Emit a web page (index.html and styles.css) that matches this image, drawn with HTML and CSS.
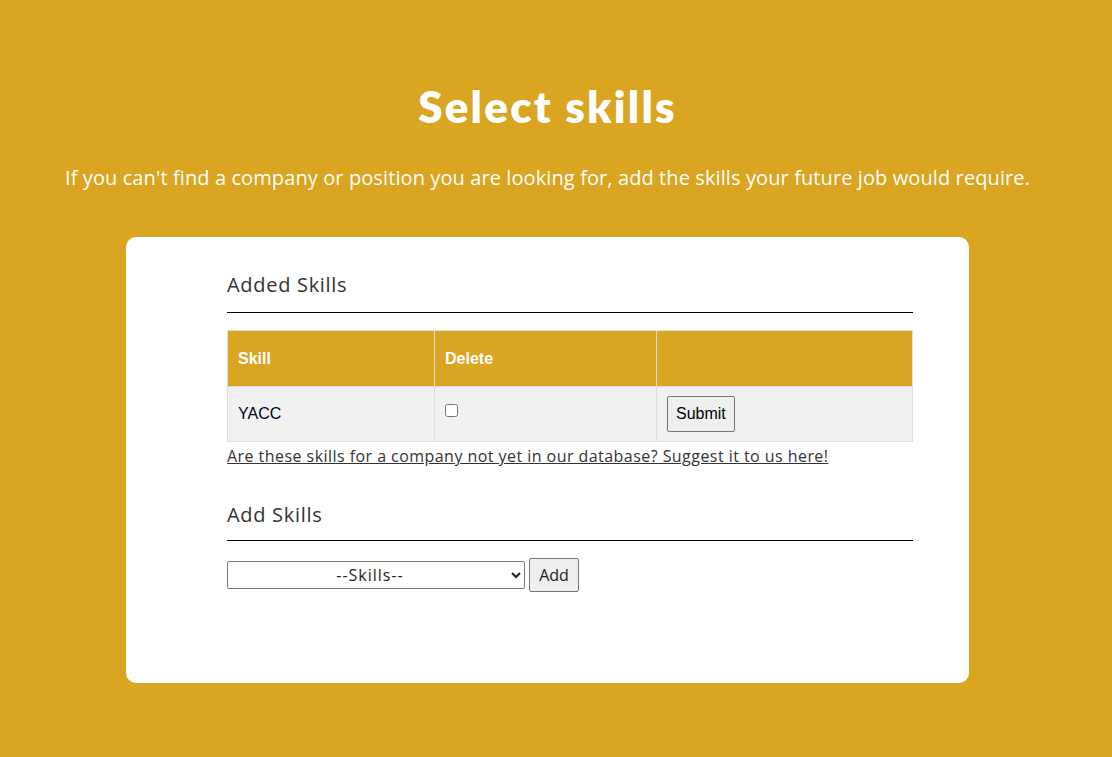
FILE: index.html
```html
<!DOCTYPE html>
<html>
<head>
<meta charset="utf-8">
<link rel="stylesheet" href="styles.css">
</head>
<body>
<div class="page">
  <h1 class="title">Select skills</h1>
  <p class="subtitle">If you can't find a company or position you are looking for, add the skills your future job would require.</p>
  <div class="card">
    <h2 class="section-title">Added Skills</h2>
    <hr class="rule">
    <table class="skills">
      <thead>
        <tr><th class="c1">Skill</th><th class="c2">Delete</th><th class="c3"></th></tr>
      </thead>
      <tbody>
        <tr>
          <td class="c1 skill-name">YACC</td>
          <td class="c2"><input type="checkbox" class="chk"></td>
          <td class="c3"><button class="submit">Submit</button></td>
        </tr>
      </tbody>
    </table>
    <a href="#" class="suggest">Are these skills for a company not yet in our database? Suggest it to us here!</a>
    <h2 class="section-title second">Add Skills</h2>
    <hr class="rule">
    <div class="add-row">
      <select class="skill-select"><option>--Skills--</option></select>
      <button class="add">Add</button>
    </div>
  </div>
</div>
</body>
</html>
```

FILE: styles.css
```css
html, body {
  margin: 0;
  padding: 0;
}
body {
  background: #daa520;
  font-family: "Open Sans", "Liberation Sans", sans-serif;
  color: #333;
}
.page {
  display: flex;
  flex-direction: column;
  align-items: center;
  padding-top: 77px;
  width: 1095px;
  height: 757px;
  box-sizing: border-box;
}
.title {
  margin: 0;
  font-family: "Lato", "Liberation Sans", sans-serif;
  font-weight: 800;
  font-size: 44px;
  line-height: 58px;
  color: #fff;
  letter-spacing: 2.2px;
}
.subtitle {
  margin: 30px 0 0;
  font-family: "Open Sans", sans-serif;
  font-size: 20px;
  line-height: 26px;
  color: #fff;
  letter-spacing: 0.1px;
}
.card {
  margin-top: 46px;
  width: 843px;
  height: 446px;
  box-sizing: border-box;
  background: #fff;
  border-radius: 10px;
  padding: 34px 56px 0 101px;
}
.section-title {
  margin: 0;
  font-family: "Open Sans", sans-serif;
  font-weight: 400;
  font-size: 20px;
  line-height: 28px;
  color: #333;
  letter-spacing: 0.7px;
}
.section-title.second {
  margin-top: 34px;
}
.rule {
  margin: 13px 0 17px;
  border: 0;
  border-top: 1px solid #000;
  height: 0;
}
.second + .rule {
  margin: 11px 0 17px;
}
.skills {
  width: 686px;
  border-collapse: collapse;
  font-family: "Liberation Sans", Arial, sans-serif;
  font-size: 16px;
}
.skills th {
  background: #daa520;
  color: #fff;
  text-align: left;
  font-weight: 700;
  padding: 18px 10px;
  height: 19px;
  border: 1px solid #ddd;
}
.skills td {
  background: #f1f1f1;
  border: 1px solid #ddd;
  padding: 9px 10px;
  height: 36px;
}
.c1 { width: 186px; }
.c2 { width: 201px; }
.skill-name { color: #000024; }
.chk {
  margin: 0;
  width: 13px;
  height: 13px;
  vertical-align: -1px;
  position: relative;
  top: -3px;
}
.submit {
  font-family: "Liberation Sans", Arial, sans-serif;
  font-size: 16px;
  color: #000;
  background: #efefef;
  border: 1px solid #767676;
  border-radius: 2px;
  padding: 7px 8px;
  height: 36px;
}
.suggest {
  display: block;
  margin-top: 3px;
  font-family: "Open Sans", sans-serif;
  font-size: 16px;
  line-height: 22px;
  color: #333;
  text-decoration: underline;
  letter-spacing: 0.45px;
}
.add-row {
  display: flex;
  align-items: center;
  gap: 4px;
}
.skill-select {
  width: 298px;
  height: 28px;
  font-family: "Open Sans", sans-serif;
  font-size: 16px;
  letter-spacing: 1px;
  color: #222;
  text-align: center;
  text-align-last: center;
  background: #fff;
  border: 1px solid #767676;
  border-radius: 2px;
}
.add {
  width: 50px;
  height: 34px;
  font-family: "Open Sans", sans-serif;
  font-size: 16px;
  color: #222;
  background: #efefef;
  border: 1px solid #767676;
  border-radius: 2px;
  padding: 0;
}
```
